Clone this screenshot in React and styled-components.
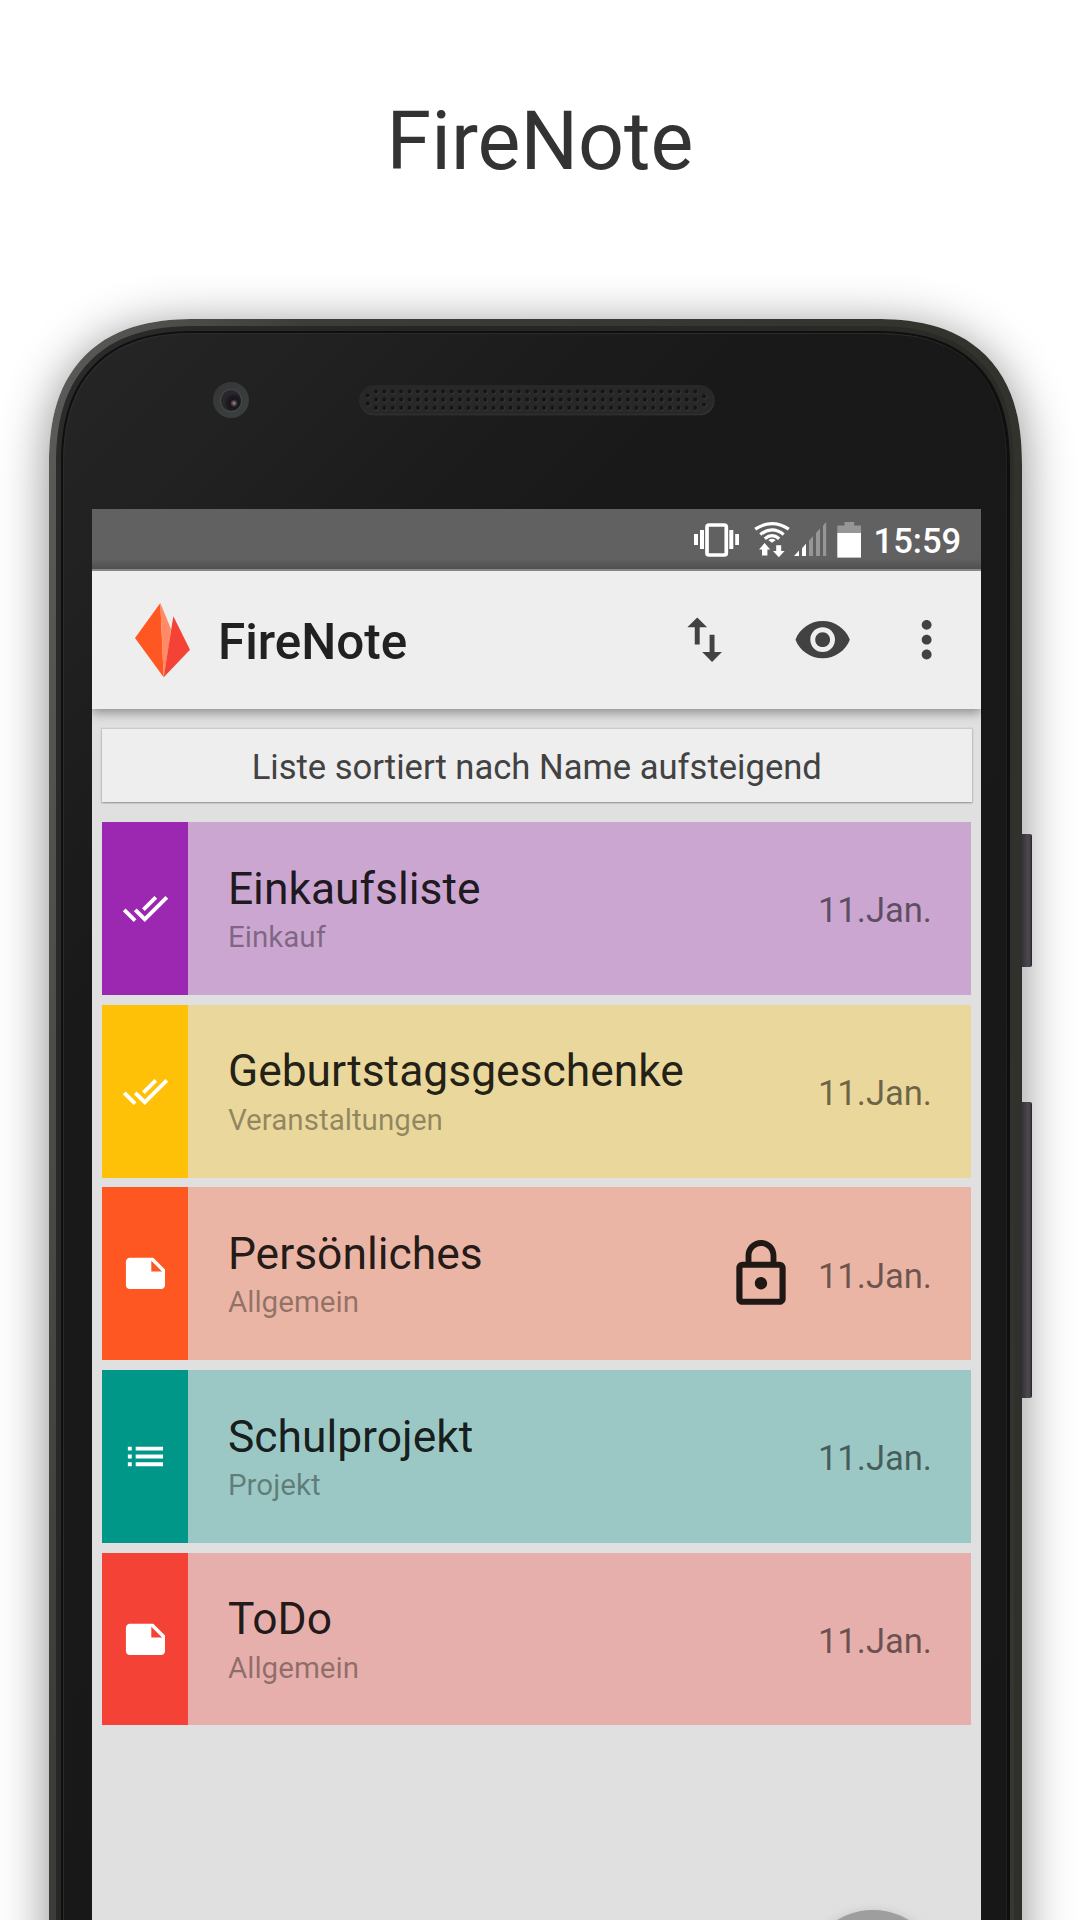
import React from "react";
import styled, { createGlobalStyle } from "styled-components";

const GlobalStyle = createGlobalStyle`
  * { box-sizing: border-box; }
  body {
    margin: 0;
    background: #fff;
    font-family: Roboto, "Noto Sans", sans-serif;
  }
`;

const Page = styled.main`
  width: 1080px;
  height: 1920px;
  overflow: hidden;
  background: #fff;
  display: flex;
  flex-direction: column;
`;

const Heading = styled.h1`
  margin: 0;
  height: 319px;
  flex: none;
  padding-top: 95px;
  font-size: 80.8px;
  line-height: 94px;
  font-weight: 400;
  text-align: center;
  color: #333;
`;

const Phone = styled.div`
  position: relative;
  flex: none;
  width: 973px;
  height: 1760px;
  margin-left: 49px;
  padding: 7px 8px 0 7px;
  border-radius: 126px;
  background: linear-gradient(100deg, #5c5d5a 0, #50514d 8%, #3c3d38 20%, #34352f 60%, #2e2f2a 100%);
  box-shadow: 0 8px 50px rgba(0, 0, 0, 0.46);

  @supports (corner-shape: superellipse(1.3)) {
    border-radius: 148px;
    corner-shape: superellipse(1.3);
  }
`;

const SideButton = styled.span`
  position: absolute;
  left: 973px;
  top: ${(p) => p.$top}px;
  width: 9.5px;
  height: ${(p) => p.$height}px;
  border-radius: 0 2px 2px 0;
  background: linear-gradient(90deg, #35333a 0, #4c484f 60%, #443f45 84%, #2c2a2c 90%);
`;

const Ring = styled.div`
  height: 100%;
  padding: 5px 4px 0 5px;
  border-radius: 119px;
  background: linear-gradient(100deg, #2b2b2b 0, #252624 30%, #2b2b28 75%, #3a3835 100%);

  @supports (corner-shape: superellipse(1.3)) {
    border-radius: 141px;
    corner-shape: superellipse(1.3);
  }
`;

const Gap = styled.div`
  height: 100%;
  padding: 2px 3px 0 2px;
  border-radius: 114px;
  background: #0f0f0f;

  @supports (corner-shape: superellipse(1.3)) {
    border-radius: 136px;
    corner-shape: superellipse(1.3);
  }
`;

const Glass = styled.div`
  height: 100%;
  border-radius: 112px;
  padding: 0 26px 0 29px;
  background: linear-gradient(135deg, #262626 0, #212121 180px, #191919 480px, #171717 100%);
  box-shadow: inset 1px 1px 1px #2d2d2d, inset -1px 0 1px #222;

  @supports (corner-shape: superellipse(1.3)) {
    border-radius: 134px;
    corner-shape: superellipse(1.3);
  }
`;

const Forehead = styled.div`
  height: 176px;
  padding: 49px 86px 0 121px;
  display: flex;
  gap: 110px;
  align-items: flex-start;
`;

const Camera = styled.div`
  width: 36px;
  height: 36px;
  border-radius: 50%;
  background: linear-gradient(135deg, #343636, #3d4040);
  display: flex;
  align-items: center;
  justify-content: center;
`;

const Lens = styled.div`
  width: 20px;
  height: 21px;
  border-radius: 50%;
  background: radial-gradient(circle at 65% 63%, #b59b97 0, #675556 1.5px, #17161c 4px, #1c1b22 7px, #29272c 10px);
  box-shadow: 0 0 0 1px #474a4a;
`;

const SpeakerGrille = styled.svg`
  display: block;
  flex: none;
  margin-top: 2.8px;
`;

const Screen = styled.div`
  width: 889px;
  height: 1500px;
  background: #e0e0e0;
  display: flex;
  flex-direction: column;
`;

const StatusBar = styled.div`
  height: 61.5px;
  flex: none;
  padding: 0 20.5px 0 602px;
  display: flex;
  align-items: flex-start;
  background: linear-gradient(#616161 0 50px, #4f4f4f 60px, #8a8a8a 60.5px);
`;

const StatusIcon = styled.svg`
  display: block;
  flex: none;
  height: 61px;
  width: ${(p) => p.$w}px;
  margin-right: ${(p) => p.$gap}px;
  fill: #fff;
`;

const Clock = styled.span`
  font-size: 34.6px;
  line-height: 40px;
  font-weight: 500;
  color: #fff;
  padding-top: 12px;
`;

const AppBar = styled.header`
  position: relative;
  height: 138.5px;
  flex: none;
  padding: 0 24.5px 0 43px;
  display: flex;
  align-items: center;
  background: #eee;
  color: #424242;
  box-shadow: 0 4px 10px rgba(0, 0, 0, 0.36);
  clip-path: inset(0 0 -20px 0);
`;

const Logo = styled.svg`
  display: block;
  width: 55px;
  height: 75px;
  margin-top: 0.5px;
`;

const AppName = styled.span`
  flex: 1;
  margin-left: 28px;
  padding-top: 4px;
  font-size: 49.4px;
  font-weight: 500;
  color: #212121;
`;

const Actions = styled.div`
  display: flex;
  gap: 59px;
`;

const Icon = styled.svg`
  display: block;
  flex: none;
  width: ${(p) => p.$size}px;
  height: ${(p) => p.$size}px;
  margin-left: ${(p) => p.$shift || 0}px;
  fill: currentColor;
`;

const Banner = styled.div`
  height: 73.5px;
  flex: none;
  margin: 19.5px 9.5px 0 10px;
  display: flex;
  align-items: center;
  justify-content: center;
  padding-top: 4px;
  background: #eee;
  color: #424242;
  font-size: 34.6px;
  box-shadow: 0 0 1.5px 1px rgba(0, 0, 0, 0.13), 0 1.5px 1.5px rgba(0, 0, 0, 0.2);
`;

const List = styled.div`
  margin: 20.2px 10px 0 10px;
  display: flex;
  flex-direction: column;
  gap: 9.95px;
`;

const Row = styled.article`
  height: 172.7px;
  display: flex;
  align-items: center;
  padding-right: 39px;
  background: ${(p) => p.$bg};
  color: rgba(0, 0, 0, 0.87);
`;

const Tag = styled.div`
  width: 86.4px;
  height: 100%;
  flex: none;
  display: flex;
  align-items: center;
  justify-content: center;
  background: ${(p) => p.$bg};
  color: #fff;
`;

const Texts = styled.div`
  flex: 1;
  padding: 0.6px 0 0 39.5px;
  display: flex;
  flex-direction: column;
  gap: 5.4px;
`;

const Title = styled.span`
  font-size: 44.4px;
  line-height: 52px;
`;

const Category = styled.span`
  font-size: 29.6px;
  line-height: 34.7px;
  color: rgba(0, 0, 0, 0.38);
`;

const DateText = styled.time`
  margin-left: 19.5px;
  padding-top: 3.5px;
  font-size: 34.6px;
  color: rgba(0, 0, 0, 0.54);
`;

const Fab = styled.div`
  width: 138px;
  height: 138px;
  flex: none;
  margin: 184.5px 39.5px 0 auto;
  border-radius: 50%;
  background: #9e9e9e;
  box-shadow: 0 6px 14px rgba(0, 0, 0, 0.3);
`;

const PATHS = {
  sort: "M9 3L5 6.99h3V14h2V6.99h3L9 3zm7 14.01V10h-2v7.01h-3L15 21l4-3.99h-3z",
  eye: "M12 4.5C7 4.5 2.73 7.61 1 12c1.73 4.39 6 7.5 11 7.5s9.27-3.11 11-7.5c-1.73-4.39-6-7.5-11-7.5zM12 17c-2.76 0-5-2.24-5-5s2.24-5 5-5 5 2.24 5 5-2.24 5-5 5zm0-8c-1.66 0-3 1.34-3 3s1.34 3 3 3 3-1.34 3-3-1.34-3-3-3z",
  more: "M12 8c1.1 0 2-.9 2-2s-.9-2-2-2-2 .9-2 2 .9 2 2 2zm0 2c-1.1 0-2 .9-2 2s.9 2 2 2 2-.9 2-2-.9-2-2-2zm0 6c-1.1 0-2 .9-2 2s.9 2 2 2 2-.9 2-2-.9-2-2-2z",
  done: "M18 7l-1.41-1.41-6.34 6.34 1.41 1.41L18 7zm4.24-1.41L11.66 16.17 7.48 12l-1.41 1.41L11.66 19l12-12-1.42-1.41zM.41 13.41L6 19l1.41-1.41L1.83 12 .41 13.41z",
  note: "M22 10l-6-6H4c-1.1 0-2 .9-2 2v12.01c0 1.1.9 1.99 2 1.99l16-.01c1.1 0 2-.89 2-1.99v-8zm-7-4.5l5.5 5.5H15V5.5z",
  list: "M3 13h2v-2H3v2zm0 4h2v-2H3v2zm0-8h2V7H3v2zm4 4h14v-2H7v2zm0 4h14v-2H7v2zM7 7v2h14V7H7z",
  lock: "M12 17c1.1 0 2-.9 2-2s-.9-2-2-2-2 .9-2 2 .9 2 2 2zm6-9h-1V6c0-2.76-2.24-5-5-5S7 3.24 7 6v2H6c-1.1 0-2 .9-2 2v10c0 1.1.9 2 2 2h12c1.1 0 2-.9 2-2V10c0-1.1-.9-2-2-2zM8.9 6c0-1.71 1.39-3.1 3.1-3.1s3.1 1.39 3.1 3.1v2H8.9V6zM18 20H6V10h12v10z",
};

const Glyph = ({ name, size, shift }) => (
  <Icon viewBox="0 0 24 24" $size={size} $shift={shift}>
    <path d={PATHS[name]} />
  </Icon>
);

const NOTES = [
  { title: "Einkaufsliste", category: "Einkauf", icon: "done", strong: "#9c27b0", soft: "#cba6d1" },
  { title: "Geburtstagsgeschenke", category: "Veranstaltungen", icon: "done", strong: "#ffc107", soft: "#e9d79b" },
  { title: "Persönliches", category: "Allgemein", icon: "note", strong: "#ff5722", soft: "#eab5a5", locked: true },
  { title: "Schulprojekt", category: "Projekt", icon: "list", strong: "#009688", soft: "#9bc8c4" },
  { title: "ToDo", category: "Allgemein", icon: "note", strong: "#f44336", soft: "#e6afac" },
];

const Speaker = () => {
  const holes = [];
  for (let c = 0; c < 39; c += 1) {
    for (let r = 0; r < 3; r += 1) holes.push([17 + c * 8.4, 6.5 + r * 8.2]);
  }
  holes.push([8.7, 10.4], [8.7, 18.7], [345, 11.4], [345, 19.6]);
  return (
    <SpeakerGrille width="356" height="31" viewBox="0 0 356 31">
      <rect x="0.5" y="0.5" width="355" height="29.8" rx="14.9" fill="#383838" />
      <rect x="0.5" y="0" width="354.2" height="29.4" rx="14.7" fill="#282828" />
      {holes.map(([x, y]) => (
        <g key={`${x}-${y}`}>
          <circle cx={x + 0.5} cy={y + 0.6} r="2.4" fill="#3a3a3a" />
          <circle cx={x} cy={y} r="2.1" fill="#151515" />
        </g>
      ))}
    </SpeakerGrille>
  );
};

const StatusIcons = () => (
  <>
    <StatusIcon viewBox="0 0 45 61" $w={45} $gap={15}>
      <rect x="0" y="25" width="4" height="11" />
      <rect x="6" y="21" width="4" height="19" />
      <rect x="13" y="16" width="19.3" height="30" rx="2" fill="none" stroke="#fff" strokeWidth="3.7" />
      <rect x="35.3" y="21" width="4" height="19" />
      <rect x="41.2" y="25" width="3.8" height="11" />
    </StatusIcon>
    <StatusIcon viewBox="0 0 36 61" $w={36} $gap={4}>
      <g fill="none" stroke="#fff" strokeWidth="3.2">
        <path d="M1.2 20.2Q18 9 34.8 20.2" />
        <path d="M6.3 25.4Q18 16.4 29.7 25.4" />
        <path d="M10.8 29.7Q18 23.6 25.2 29.7" />
      </g>
      <path d="M14.4 31.2Q18 28.4 21.6 31.2L18 33.8z" />
      <path d="M10.6 34l5.6 6.4h-2.8v6H8v-6H5z" />
      <path d="M22.2 36.2h5V42h3.4l-5.8 6.2-5.8-6.2h3.2z" />
    </StatusIcon>
    <StatusIcon viewBox="0 0 33 61" $w={33} $gap={10}>
      <path d="M0 47l5-5.400v5.400z" />
      <path d="M8 47V39.200l4-4.400V47z" />
      <g fill="#969696">
        <path d="M15 47V31.600l4-4.400V47z" />
        <path d="M22 47V24l4-4.400V47z" />
        <path d="M29 47V16.600l3.200-3.500V47z" />
      </g>
    </StatusIcon>
    <StatusIcon viewBox="0 0 25 61" $w={25} $gap={11.5}>
      <path d="M0.300 24.200V16.500H7.500V13h9.700v3.500h6.800v7.700z" fill="#969696" />
      <rect x="0.300" y="24" width="23.700" height="24.600" />
    </StatusIcon>
  </>
);

export default function App() {
  return (
    <Page>
      <GlobalStyle />
      <Heading>FireNote</Heading>
      <Phone>
        <SideButton $top={514.7} $height={133} />
        <SideButton $top={783} $height={295.7} />
        <Ring>
          <Gap>
            <Glass>
              <Forehead>
                <Camera>
                  <Lens />
                </Camera>
                <Speaker />
              </Forehead>
              <Screen>
                <StatusBar>
                  <StatusIcons />
                  <Clock>15:59</Clock>
                </StatusBar>
                <AppBar>
                  <Logo viewBox="135 127 165 225">
                    <polygon points="211,127 135,232 221,350" fill="#ff5722" />
                    <polygon points="211,127 243,205 236,260 221,350" fill="#ff8a65" />
                    <polygon points="250,167 300,267 221,350" fill="#f44336" />
                  </Logo>
                  <AppName>FireNote</AppName>
                  <Actions>
                    <Glyph name="sort" size={59.3} />
                    <Glyph name="eye" size={59.3} />
                    <Glyph name="more" size={59.3} shift={-14.5} />
                  </Actions>
                </AppBar>
                <Banner>Liste sortiert nach Name aufsteigend</Banner>
                <List>
                  {NOTES.map((n) => (
                    <Row key={n.title} $bg={n.soft}>
                      <Tag $bg={n.strong}>
                        <Glyph name={n.icon} size={46.9} />
                      </Tag>
                      <Texts>
                        <Title>{n.title}</Title>
                        <Category>{n.category}</Category>
                      </Texts>
                      {n.locked && <Glyph name="lock" size={74} />}
                      <DateText>11.Jan.</DateText>
                    </Row>
                  ))}
                </List>
                <Fab />
              </Screen>
            </Glass>
          </Gap>
        </Ring>
      </Phone>
    </Page>
  );
}
